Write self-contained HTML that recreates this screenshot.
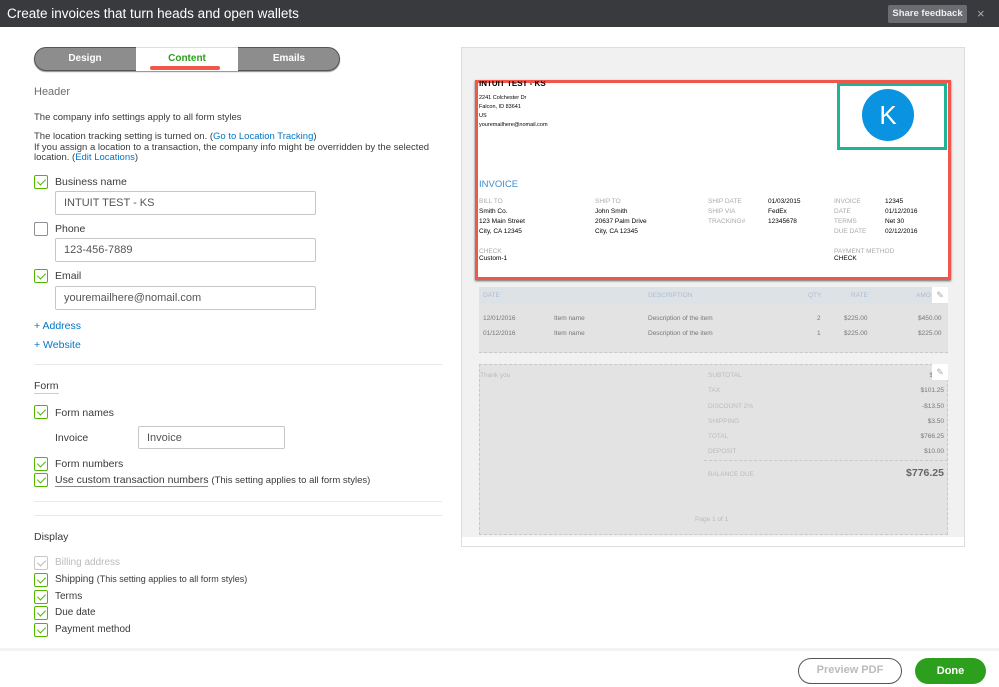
<!DOCTYPE html>
<html><head><meta charset="utf-8"><style>
*{margin:0;padding:0;box-sizing:border-box}
body{width:999px;height:687px;overflow:hidden;background:#fff;font-family:"Liberation Sans",sans-serif;position:relative;color:#393a3d}
.a{position:absolute;white-space:nowrap}
.cb{position:absolute;width:14px;height:14px;border:1px solid #53b700;border-radius:2px;background:#fff}
.cb::after{content:"";position:absolute;left:4px;top:1px;width:4px;height:7px;border:solid #53b700;border-width:0 1.3px 1.3px 0;transform:rotate(45deg)}
.cb.off{border-color:#8d9096}.cb.off::after{display:none}
.cb.dis{border-color:#c8c8c8}.cb.dis::after{border-color:#bbb}
.inp{position:absolute;border:1px solid #c6c6c6;border-radius:2px;height:24px;font-size:11px;padding:5px 8px;color:#555}
.t{font-size:10px}
.lnk{color:#0077c5}
.p{font-size:5.5px;color:#000}
.g{color:#aaa}
.s{font-size:6.5px}
</style></head><body>
<div class="a" style="left:0;top:0;width:999px;height:27px;background:#393a3d"></div>
<div class="a" style="left:7px;top:6px;font-size:13.5px;color:#fff">Create invoices that turn heads and open wallets</div>
<div class="a" style="left:888px;top:5px;width:79px;height:18px;background:#6b6c72;border-radius:2px;color:#eee;font-size:9.5px;font-weight:bold;text-align:center;line-height:18px">Share feedback</div>
<div class="a" style="left:977px;top:6px;color:#aaa;font-size:13px">×</div>

<div class="a" style="left:34px;top:47px;width:306px;height:24px;border-radius:12px;background:#8d8d8d;border:1px solid #555;box-shadow:0 1px 1px #888"></div>
<div class="a" style="left:136px;top:47px;width:102px;height:24px;background:#fff;border-top:1px solid #ddd"></div>
<div class="a" style="left:34px;top:53px;width:102px;text-align:center;color:#fff;font-size:10px;font-weight:bold">Design</div>
<div class="a" style="left:136px;top:53px;width:102px;text-align:center;color:#2ca01c;font-size:10px;font-weight:bold">Content</div>
<div class="a" style="left:238px;top:53px;width:102px;text-align:center;color:#fff;font-size:10px;font-weight:bold">Emails</div>
<div class="a" style="left:150px;top:66px;width:70px;height:4px;background:#f0564a;border-radius:2px"></div>

<div class="a" style="left:34px;top:86px;font-size:11px;color:#6b6c72">Header</div>
<div class="a t" style="left:34px;top:112px;font-size:9.5px">The company info settings apply to all form styles</div>
<div class="a t" style="left:34px;top:132px;line-height:10.5px;white-space:normal;width:420px;font-size:9.5px">The location tracking setting is turned on. (<span class="lnk">Go to Location Tracking</span>)<br>If you assign a location to a transaction, the company info might be overridden by the selected location. (<span class="lnk">Edit Locations</span>)</div>

<div class="cb" style="left:34px;top:175px"></div><div class="a t" style="left:55px;top:176px;font-size:10.5px">Business name</div>
<div class="inp" style="left:55px;top:191px;width:261px">INTUIT TEST - KS</div>
<div class="cb off" style="left:34px;top:222px"></div><div class="a t" style="left:55px;top:223px;font-size:10.5px">Phone</div>
<div class="inp" style="left:55px;top:238px;width:261px">123-456-7889</div>
<div class="cb" style="left:34px;top:269px"></div><div class="a t" style="left:55px;top:270px;font-size:10.5px">Email</div>
<div class="inp" style="left:55px;top:286px;width:261px">youremailhere@nomail.com</div>
<div class="a lnk" style="left:34px;top:320px;font-size:10.5px">+ Address</div>
<div class="a lnk" style="left:34px;top:339px;font-size:10.5px">+ Website</div>
<div class="a" style="left:34px;top:364px;width:408px;height:1px;background:#e8e8e8"></div>
<div class="a" style="left:34px;top:380px;font-size:10.5px;border-bottom:1px solid #ccc;padding-bottom:1px">Form</div>
<div class="cb" style="left:34px;top:405px"></div><div class="a" style="left:55px;top:407px;font-size:10.5px">Form names</div>
<div class="a" style="left:55px;top:432px;font-size:10.5px">Invoice</div>
<div class="inp" style="left:138px;top:426px;width:147px;height:23px">Invoice</div>
<div class="cb" style="left:34px;top:457px"></div><div class="a" style="left:55px;top:458px;font-size:10.5px">Form numbers</div>
<div class="cb" style="left:34px;top:473px"></div><div class="a" style="left:55px;top:474px;font-size:10.5px"><span style="border-bottom:1px solid #888">Use custom transaction numbers</span> <span style="font-size:9.5px">(This setting applies to all form styles)</span></div>
<div class="a" style="left:34px;top:501px;width:408px;height:1px;background:#e8e8e8"></div>
<div class="a" style="left:34px;top:515px;width:408px;height:1px;background:#e8e8e8"></div>
<div class="a" style="left:34px;top:531px;font-size:10.5px">Display</div>
<div class="cb dis" style="left:34px;top:556px"></div><div class="a" style="left:55px;top:557px;font-size:10px;color:#bbb">Billing address</div>
<div class="cb" style="left:34px;top:573px"></div><div class="a" style="left:55px;top:574px;font-size:10px">Shipping <span style="font-size:9px">(This setting applies to all form styles)</span></div>
<div class="cb" style="left:34px;top:590px"></div><div class="a" style="left:55px;top:591px;font-size:10px">Terms</div>
<div class="cb" style="left:34px;top:606px"></div><div class="a" style="left:55px;top:607px;font-size:10px">Due date</div>
<div class="cb" style="left:34px;top:623px"></div><div class="a" style="left:55px;top:624px;font-size:10px">Payment method</div>

<!-- preview -->
<div class="a" style="left:461px;top:47px;width:504px;height:500px;background:#f1f1f1;border:1px solid #ddd"></div>
<div class="a" style="left:462px;top:537px;width:502px;height:9px;background:#fff"></div>
<div class="a" style="left:475px;top:80px;width:476px;height:200px;background:#fff;border:3px solid #f0564a;box-shadow:0 1px 2px #666"></div>
<div class="a" style="left:837px;top:83px;width:110px;height:67px;border:3px solid #1fb497"></div>
<div class="a" style="left:862px;top:89px;width:52px;height:52px;border-radius:50%;background:#0a93e1;color:#fff;font-size:26px;text-align:center;line-height:52px">K</div>
<div class="a" style="left:479px;top:81px;font-size:8px;font-weight:bold;color:#000;height:7px;overflow:hidden;line-height:5px">INTUIT TEST - KS</div>
<div class="a p" style="left:479px;top:94px;line-height:9px">2241 Colchester Dr<br>Falcon, ID 83641<br>US<br>youremailhere@nomail.com</div>
<div class="a" style="left:479px;top:179px;font-size:9.5px;color:#3a8fd0">INVOICE</div>
<div class="a s" style="left:479px;top:197px;line-height:10px;color:#000"><span class="g">BILL TO</span><br>Smith Co.<br>123 Main Street<br>City, CA 12345</div>
<div class="a s" style="left:595px;top:197px;line-height:10px;color:#000"><span class="g">SHIP TO</span><br>John Smith<br>20637 Palm Drive<br>City, CA 12345</div>
<div class="a s g" style="left:708px;top:197px;line-height:10px">SHIP DATE<br>SHIP VIA<br>TRACKING#</div>
<div class="a s" style="left:768px;top:197px;line-height:10px;color:#000">01/03/2015<br>FedEx<br>12345678</div>
<div class="a s g" style="left:834px;top:197px;line-height:10px">INVOICE<br>DATE<br>TERMS<br>DUE DATE</div>
<div class="a s" style="left:885px;top:197px;line-height:10px;color:#000">12345<br>01/12/2016<br>Net 30<br>02/12/2016</div>
<div class="a s" style="left:479px;top:248px;line-height:7px;color:#000"><span class="g">CHECK</span><br>Custom-1</div>
<div class="a s" style="left:834px;top:248px;line-height:7px;color:#000"><span class="g">PAYMENT METHOD</span><br>CHECK</div>

<div class="a" style="left:479px;top:287px;width:469px;height:66px;background:#e3e3e3;border-bottom:1px dashed #c8c8c8"></div>
<div class="a" style="left:479px;top:287px;width:469px;height:17px;background:#dde2e6"></div>
<div class="a s" style="left:483px;top:292px;color:#aabed0">DATE</div>
<div class="a s" style="left:648px;top:292px;color:#aabed0">DESCRIPTION</div>
<div class="a s" style="left:808px;top:292px;color:#aabed0">QTY</div>
<div class="a s" style="left:851px;top:292px;color:#aabed0">RATE</div>
<div class="a s" style="left:916px;top:292px;color:#aabed0">AMO</div>
<div class="a" style="left:932px;top:287px;width:16px;height:16px;background:#fff;color:#aaa;font-size:9px;text-align:center;line-height:16px">✎</div>
<div class="a s" style="left:483px;top:311px;line-height:15px;color:#777">12/01/2016<br>01/12/2016</div>
<div class="a s" style="left:554px;top:311px;line-height:15px;color:#777">Item name<br>Item name</div>
<div class="a s" style="left:648px;top:311px;line-height:15px;color:#777">Description of the item<br>Description of the item</div>
<div class="a s" style="left:817px;top:311px;line-height:15px;color:#777">2<br>1</div>
<div class="a s" style="left:844px;top:311px;line-height:15px;color:#777">$225.00<br>$225.00</div>
<div class="a s" style="left:918px;top:311px;line-height:15px;color:#777;text-align:right">$450.00<br>$225.00</div>

<div class="a" style="left:479px;top:364px;width:469px;height:171px;background:#e3e3e3;border:1px dashed #c8c8c8"></div>
<div class="a s" style="left:480px;top:372px;color:#bbb">Thank you</div>
<div class="a s g" style="left:708px;top:368px;line-height:15.3px;color:#bbb">SUBTOTAL<br>TAX<br>DISCOUNT 2%<br>SHIPPING<br>TOTAL<br>DEPOSIT</div>
<div class="a s" style="left:900px;top:368px;width:44px;line-height:15.3px;color:#777;text-align:right">$675<br>$101.25<br>-$13.50<br>$3.50<br>$766.25<br>$10.00</div>
<div class="a" style="left:932px;top:364px;width:16px;height:16px;background:#fff;color:#aaa;font-size:9px;text-align:center;line-height:16px">✎</div>
<div class="a" style="left:704px;top:460px;width:244px;border-top:1px dashed #c8c8c8"></div>
<div class="a s" style="left:708px;top:471px;color:#bbb">BALANCE DUE</div>
<div class="a" style="left:880px;top:467px;width:64px;text-align:right;font-size:10.5px;font-weight:bold;color:#666">$776.25</div>
<div class="a s" style="left:695px;top:516px;color:#bbb">Page 1 of 1</div>

<!-- footer -->
<div class="a" style="left:0;top:648px;width:999px;height:3px;background:#f2f3f5"></div>
<div class="a" style="left:798px;top:658px;width:104px;height:26px;border:1.5px solid #555;border-radius:13px;color:#bbb;font-size:11px;font-weight:bold;text-align:center;line-height:23px">Preview PDF</div>
<div class="a" style="left:915px;top:658px;width:71px;height:26px;background:#2ca01c;border-radius:13px;color:#fff;font-size:11px;font-weight:bold;text-align:center;line-height:26px">Done</div>
</body></html>
